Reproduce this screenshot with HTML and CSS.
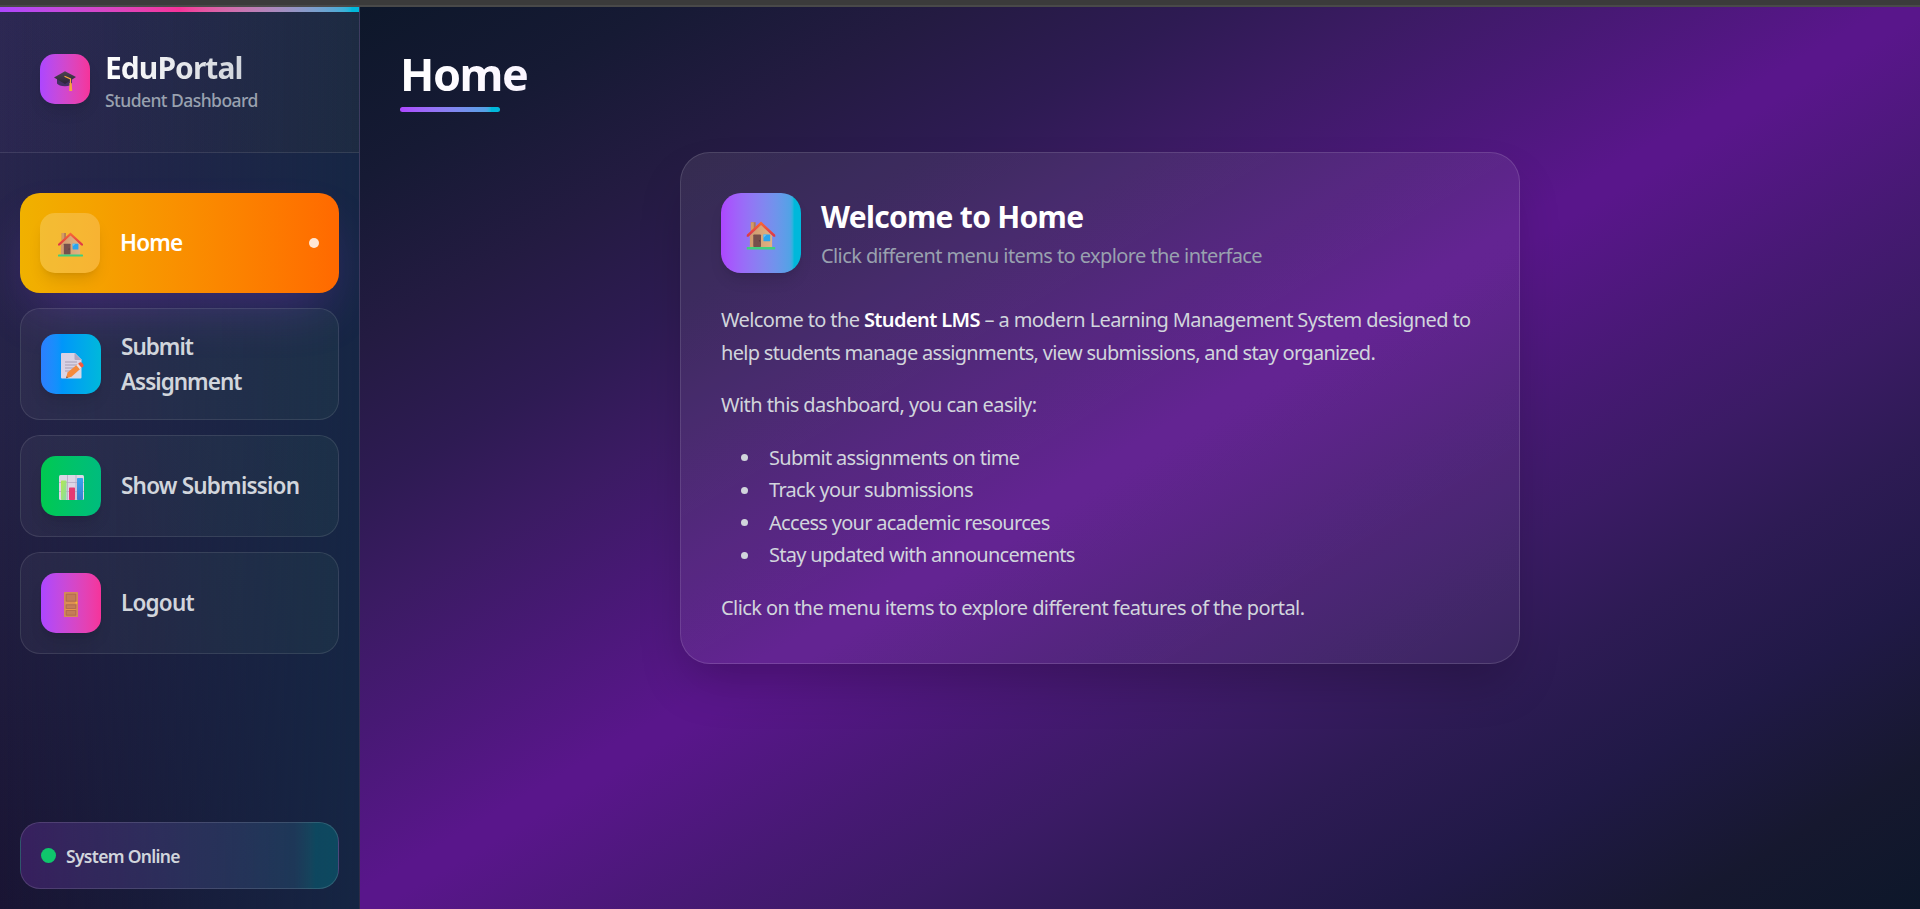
FILE: index.html
```html
<!DOCTYPE html>
<html lang="en">
<head>
<meta charset="utf-8">
<title>EduPortal</title>
<link rel="stylesheet" href="styles.css">
</head>
<body>
<svg class="defs" aria-hidden="true">
  <defs>
    <linearGradient id="wall" x1="0" x2="1" y1="0" y2="0"><stop offset="0" stop-color="#d09a6c"/><stop offset="1" stop-color="#e0b284"/></linearGradient>
    <linearGradient id="roof" x1="0" x2="0" y1="0" y2="1"><stop offset="0" stop-color="#fb6a35"/><stop offset="1" stop-color="#dc3548"/></linearGradient>
    <linearGradient id="paper" x1="0" x2="1" y1="0" y2="1"><stop offset="0" stop-color="#d9cfe4"/><stop offset="1" stop-color="#dad8e6"/></linearGradient>
    <linearGradient id="cap" x1="0" x2="0" y1="0" y2="1"><stop offset="0" stop-color="#4c4450"/><stop offset="1" stop-color="#2c2238"/></linearGradient>
    <linearGradient id="lime" x1="0" x2="1" y1="0" y2="1"><stop offset="0" stop-color="#b6e84f"/><stop offset="1" stop-color="#84dca8"/></linearGradient>
    <linearGradient id="blue" x1="0" x2="0" y1="0" y2="1"><stop offset="0" stop-color="#3aa5ee"/><stop offset="1" stop-color="#3b7fd0"/></linearGradient>
    <symbol id="house" viewBox="0 0 30 30">
      <path fill="#ad7a55" d="M4.500 1.200h5v9h-5z"/><path fill="#d39a66" d="M4.500 1.200h3v9h-3z"/>
      <path fill="url(#wall)" d="M3.500 15 15 3.500 26.500 15v13h-23z"/>
      <path fill="url(#roof)" d="M15 .5 30 14.500v1.800h-2L15 4.200 2 16.300H0v-1.800z"/>
      <rect x="7" y="14" width="8" height="13" rx=".8" fill="#76504c"/><circle cx="13.300" cy="20.500" r=".6" fill="#4e2d30"/>
      <rect x="17.500" y="14" width="7" height="7" rx=".5" fill="#29a5ee"/><path fill="#67c5f4" d="M17.500 14h3.500l-3.500 3.500z"/>
      <rect y="27" width="30" height="2.400" rx="1" fill="#3fd07f"/>
    </symbol>
  </defs>
</svg>
<div class="browser-edge"></div>
<div class="app">
  <aside class="sidebar">
    <header class="brand">
      <div class="brand-icon">
        <svg width="22" height="21" viewBox="0 0 22 21"><path fill="#433063" d="M3 8v4.500c1 1.600 4 2.800 8 2.800s6.500-1.200 7-2.800V8z"/><path fill="url(#cap)" d="M11 .3 22 6 11 13 0 6.600z"/><path fill="none" stroke="#f6a63c" stroke-width="1.200" d="M10.500 5.200 16.500 8v5"/><path fill="#f6a63c" d="M15.500 12h2.200l.5 8h-3z"/></svg>
      </div>
      <div>
        <div class="brand-name">EduPortal</div>
        <div class="brand-sub">Student Dashboard</div>
      </div>
    </header>
    <nav class="menu">
      <a class="item active">
        <span class="tile tile-glass"><svg width="25" height="25"><use href="#house"/></svg></span>
        <span class="label">Home</span><span class="dot"></span>
      </a>
      <a class="item">
        <span class="tile tile-blue"><svg width="25" height="27" viewBox="0 0 25 27"><path fill="url(#paper)" d="M3 1h13l6.500 6.500v18a1 1 0 0 1-1 1H3a1 1 0 0 1-1-1V2a1 1 0 0 1 1-1z"/><path fill="#b3a6c0" d="M15.500 1l7 7h-6a1 1 0 0 1-1-1z"/><path stroke="#a79db4" stroke-width="1" d="M6 10h12M6 13h12M6 16h9M6 19h7"/><path fill="#f58a3c" d="m8.500 20.500 10-8.200 3.500 4-9.500 8.500-5.500 1.500z"/><path fill="#ece1e4" d="m17.300 13.300 1.800-1.500 3.500 4-1.800 1.500z"/><path fill="#f25a3c" d="m19.100 11.800 1.600-1.300c1.800-.8 4.700 2.200 3.700 3.900l-1.800 1.400z"/><path fill="#7c564d" d="m7.700 24.300-.7 2 2-.6z"/></svg></span>
        <span class="label label-wrap">Submit Assignment</span>
      </a>
      <a class="item">
        <span class="tile tile-green"><svg width="25" height="25" viewBox="0 0 25 25"><rect width="25" height="25" rx="1.500" fill="#dcd6e6"/><path stroke="#b5aac4" stroke-width=".8" d="M0 7.500h25M0 16.500h25M8.500 0v25M17 0v25"/><rect x="2" y="5.500" width="5.500" height="19.500" rx=".7" fill="url(#lime)"/><rect x="10" y="12.500" width="6" height="12.500" rx=".7" fill="#e63a72"/><rect x="18" y="3" width="6" height="22" rx=".7" fill="url(#blue)"/></svg></span>
        <span class="label">Show Submission</span>
      </a>
      <a class="item">
        <span class="tile tile-pink"><svg width="14" height="25" viewBox="0 0 14 25"><rect width="14" height="25" rx=".5" fill="#d38a58"/><path fill="#c57c58" stroke="#a9644a" stroke-width=".7" d="M2.200 2.200h9.600v7H2.200zM2.200 12.800h9.600v3.700H2.200zM2.200 18.500h9.600v4.700H2.200z"/><path stroke="#ee9a4b" stroke-width=".8" d="M1.500 11h10M1.500 17.500h10"/><circle cx="12.400" cy="10.800" r="1" fill="#ffc02c"/></svg></span>
        <span class="label">Logout</span>
      </a>
    </nav>
    <footer class="status"><span class="status-dot"></span><span class="status-text">System Online</span></footer>
  </aside>
  <main class="main">
    <h1 class="title">Home</h1>
    <div class="underline"></div>
    <section class="card">
      <div class="card-head">
        <div class="card-icon"><svg width="30" height="29" viewBox="0 0 30 30"><use href="#house"/></svg></div>
        <div>
          <h2 class="card-title">Welcome to Home</h2>
          <p class="card-sub">Click different menu items to explore the interface</p>
        </div>
      </div>
      <div class="copy">
        <p class="intro">Welcome to the <strong>Student LMS</strong> – a modern Learning Management System designed to<br><span class="tight">help students manage assignments, view submissions, and stay organized.</span></p>
        <p>With this dashboard, you can easily:</p>
        <ul class="tight">
          <li>Submit assignments on time</li>
          <li>Track your submissions</li>
          <li>Access your academic resources</li>
          <li>Stay updated with announcements</li>
        </ul>
        <p>Click on the menu items to explore different features of the portal.</p>
      </div>
    </section>
  </main>
</div>
</body>
</html>
```
FILE: styles.css
```css
* { box-sizing: border-box; margin: 0; padding: 0; }
body { height: 909px; display: flex; flex-direction: column; overflow: hidden; background: #0f172b; font: 20px/30px "Noto Sans", "Open Sans", sans-serif; color: #d1d5dc; }
.defs { position: absolute; width: 0; height: 0; }
.browser-edge { flex: none; height: 7px; background: #3b3b3b; border-bottom: 2px solid #494949; }
.app { flex: 1; display: flex; min-height: 0; }

.sidebar {
  width: 360px; flex: none; display: flex; flex-direction: column;
  border-right: 1px solid rgba(255,255,255,.1);
  background:
    linear-gradient(to right, rgba(21,37,68,0), rgba(21,38,68,.95)),
    linear-gradient(to bottom, #2a2750, #242246 45%, #191433);
}
.brand {
  height: 146px; padding: 39px 40px 40px; display: flex; align-items: center; gap: 15px;
  border-bottom: 1px solid rgba(255,255,255,.1); position: relative;
  background: linear-gradient(to right, rgba(120,70,160,.04), rgba(70,70,50,.14));
}
.brand::before { content: ""; position: absolute; inset: 0 0 auto; height: 5px; background: linear-gradient(to right in oklab, #ad46ff, #f6339a 50%, #5ba8d4 93%, #00b8db 98%); }
.brand-icon { width: 50px; height: 50px; border-radius: 15px; display: grid; place-items: center; padding-top: 4px; background: linear-gradient(to right in oklab, #ad46ff, #f6339a); box-shadow: 0 10px 15px -3px rgba(0,0,0,.1), 0 4px 6px -4px rgba(0,0,0,.1); }
.brand-name { font-size: 30px; font-weight: 700; line-height: 38px; padding-top: 2px; letter-spacing: -.950px; width: max-content; background: linear-gradient(to right, #fff, #d1d5dc); background-clip: text; color: transparent; }
.brand-sub { font-size: 17.500px; font-weight: 500; line-height: 23px; padding-top: 2px; letter-spacing: -.550px; color: #99a1af; white-space: nowrap; }

.menu { flex: 1; padding: 40px 20px 0; display: flex; flex-direction: column; gap: 15px; }
.item { display: flex; align-items: center; gap: 20px; padding: 20px; border: 1px solid rgba(255,255,255,.1); border-radius: 20px; background: linear-gradient(to right, rgba(255,255,255,.045), rgba(80,140,110,.1)); }
.item.active { border: 0; background: linear-gradient(to right in oklab, #f0b100, #ff6900); color: #fff; box-shadow: 0 25px 50px -12px rgba(173,70,255,.25); }
.tile { width: 60px; height: 60px; flex: none; border-radius: 15px; display: grid; place-items: center; padding-top: 3px; box-shadow: 0 10px 15px -3px rgba(0,0,0,.1), 0 4px 6px -4px rgba(0,0,0,.1); }
.tile-glass { background: rgba(255,255,255,.2); }
.tile-blue { background: linear-gradient(to right in oklab, #2b7fff, #0096fa 35%, #00b8db); }
.tile-green { background: linear-gradient(to right in oklab, #00c950, #00bc7d); }
.tile-pink { background: linear-gradient(to right in oklab, #ad46ff, #f6339a); }
.label { flex: 1; font-size: 22.500px; font-weight: 600; line-height: 35px; letter-spacing: -.8px; margin-bottom: 1px; }
.label-wrap { letter-spacing: -1px; margin-bottom: 0; }
.dot { width: 10px; height: 10px; border-radius: 50%; background: rgba(255,255,255,.83); }
.status { height: 67px; margin: 0 20px 20px; padding: 0 20px; display: flex; align-items: center; gap: 10px; border: 1px solid rgba(255,255,255,.13); border-radius: 20px; background: linear-gradient(to right in oklab, rgba(173,70,255,.2), rgba(60,140,180,.2) 86%, rgba(0,140,150,.35) 93%); }
.status-dot { width: 15px; height: 15px; border-radius: 50%; background: #0fc66c; }
.status-text { font-size: 17.500px; font-weight: 600; letter-spacing: -.7px; }

.main { flex: 1; padding: 40px 120px 40px 40px; background: linear-gradient(to bottom right, #0d172a, #161a34 9.600%, #241b42 19%, #2e1b53 27%, #3b1b63 33.500%, #471974 40%, #59168b 49%, #59168b 50.500%, #471974 60%, #3b1b65 67%, #2e1b55 74%, #201946 83%, #16182f 92%, #0d172a); }
.title { font-size: 45px; line-height: 46px; padding-top: 4px; font-weight: 700; width: max-content; background: linear-gradient(to right, #fff, #faf5ff); background-clip: text; color: transparent; letter-spacing: -1.500px; }
.underline { width: 100px; height: 5px; margin-top: 10px; border-radius: 5px; background: linear-gradient(to right in oklab, #ad46ff, #52a2e6 86%, #00b8db 91%); }
.card { width: 840px; height: 512px; margin: 40px auto 0; padding: 40px; border: 1px solid rgba(255,255,255,.13); border-radius: 30px; background: linear-gradient(to bottom right, rgba(255,255,255,.08), rgba(255,255,255,.05)); box-shadow: 0 25px 50px -12px rgba(0,0,0,.25); }
.card-head { display: flex; align-items: center; gap: 20px; margin-bottom: 30px; }
.card-icon { width: 80px; height: 80px; border-radius: 20px; display: grid; place-items: center; padding-top: 4px; background: linear-gradient(to right in oklab, #ad46ff, #52a2e6 86%, #00b8db 91%); box-shadow: 0 10px 15px -3px rgba(0,0,0,.1), 0 4px 6px -4px rgba(0,0,0,.1); }
.card-title { font-size: 30px; line-height: 38px; padding-top: 2px; font-weight: 700; color: #fff; margin-bottom: 5px; letter-spacing: -.7px; }
.card-sub { color: #99a1af; letter-spacing: -.590px; }
.copy { margin-top: 31px; line-height: 32.500px; display: flex; flex-direction: column; gap: 20px; letter-spacing: -.570px; white-space: nowrap; }
.card-head + .copy { margin-top: 0; padding-top: 1px; }
.copy .intro { letter-spacing: -.610px; }
.copy .tight { letter-spacing: -.700px; }
.copy strong { color: #fff; font-weight: 600; }
.copy ul { list-style: none; }
.copy li { display: flex; align-items: center; gap: 21px; padding-left: 20px; }
.copy li::before { content: ""; width: 7px; height: 7px; border-radius: 50%; background: #d1d5dc; }
```
